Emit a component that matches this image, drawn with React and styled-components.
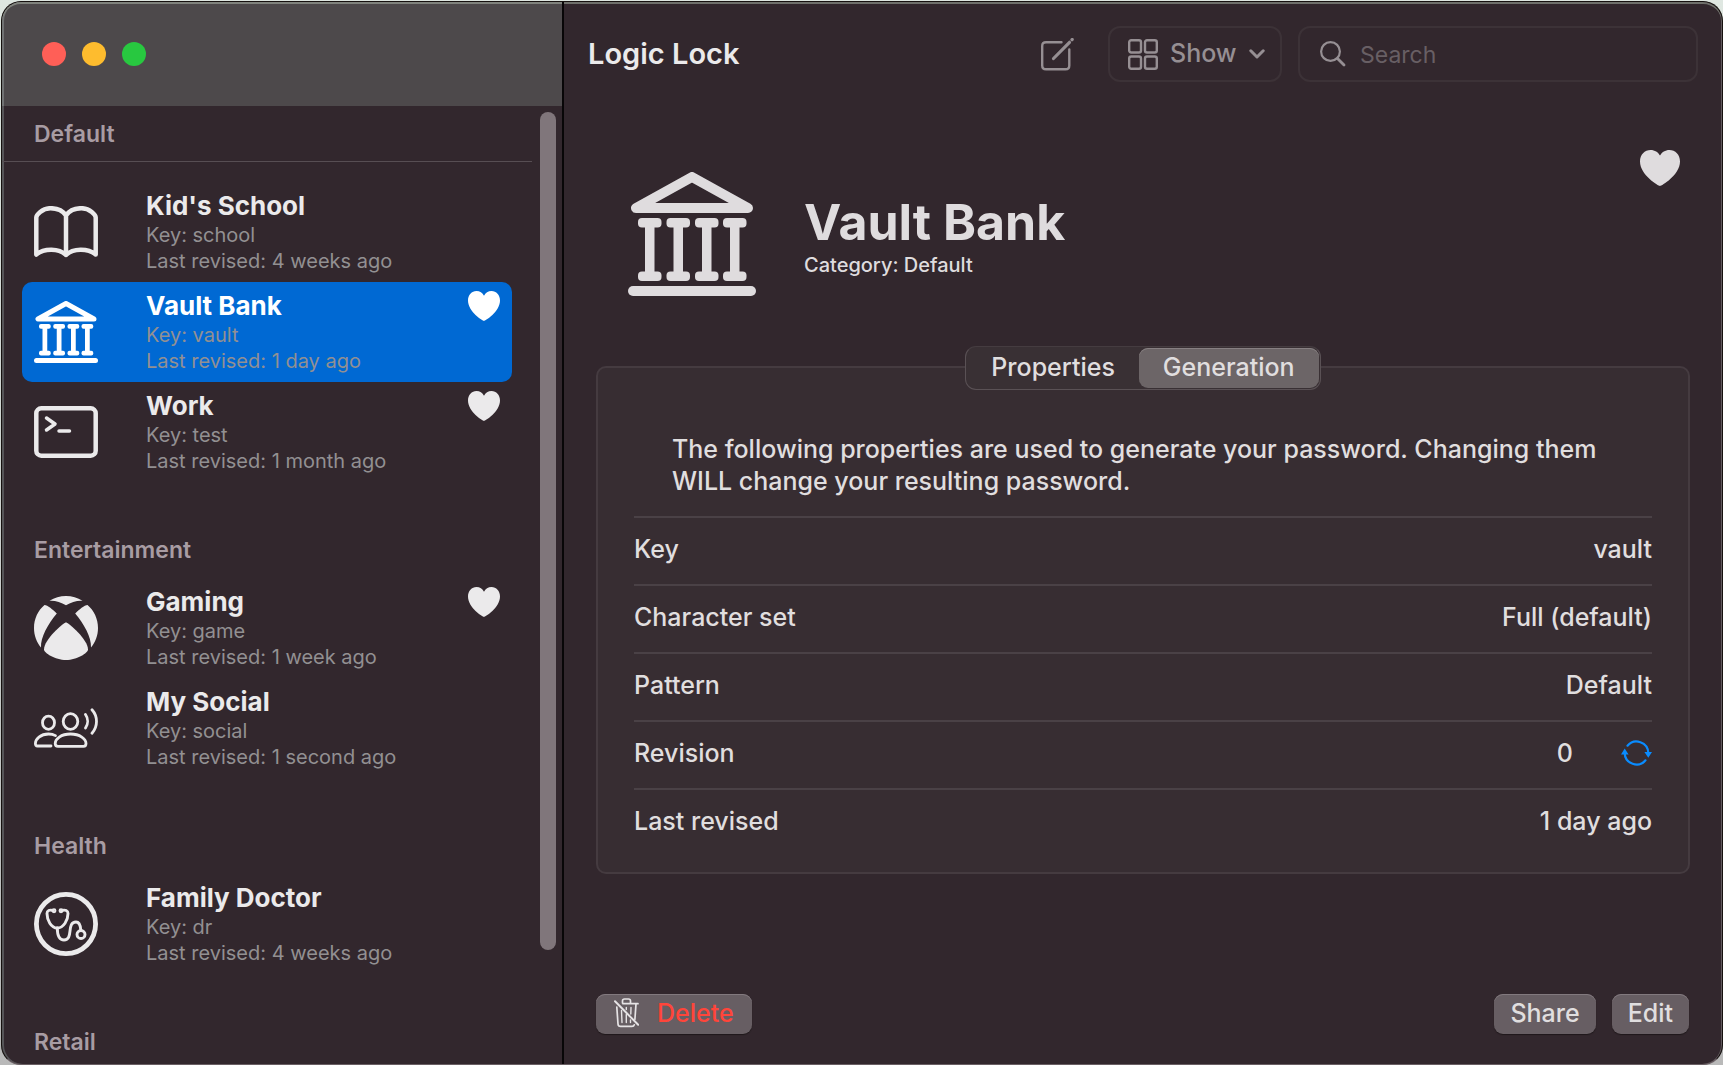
import { useState } from 'react';
import styled, { createGlobalStyle, css } from 'styled-components';

const colors = {
    window: '#32272d',
    panel: '#372d32',
    line: '#4a4146',
    text: '#e0dedf',
    bright: '#ebeaeb',
    muted: '#929092',
    heading: '#a89ca3',
    toolbar: '#968f93',
    outline: '#3c3237',
    button: '#675e63',
    accent: '#0069d3',
};

const GlobalStyle = createGlobalStyle`
    * {
        box-sizing: border-box;
    }

    body {
        margin: 0;
        background: linear-gradient(#dfe7e1, #b9b9b9);
        color: ${colors.text};
        font-family: Inter, "Liberation Sans", sans-serif;
    }

    button, input, select {
        font: inherit;
        color: inherit;
    }

    h1, h2, p, ul, dl, dd {
        margin: 0;
        padding: 0;
    }
`;

const Page = styled.div`
    height: 100vh;
    padding: 1px 0 0 1px;
`;

const Window = styled.div`
    display: flex;
    height: 100%;
    border: 1px solid #16110f;
    border-bottom-color: #6a5f64;
    border-radius: 20px;
    background: ${colors.window};
    box-shadow: inset 0 2px 0 #6f706b, inset 2px 0 0 #565558, inset -1px 0 0 #625a5e;
    overflow: hidden;
`;

const Sidebar = styled.aside`
    display: flex;
    flex-direction: column;
    flex: 0 0 562px;
    border-right: 2px solid #080607;
`;

const TitleBar = styled.div`
    display: flex;
    align-items: center;
    gap: 16px;
    flex: 0 0 104px;
    padding-left: 40px;
    background: #4d494b;
    box-shadow: inset 0 2px 0 #80837d, inset 2px 0 0 #707273;
    border-top-left-radius: 19px;
`;

const Light = styled.button`
    width: 24px;
    height: 24px;
    padding: 0;
    border: 0;
    border-radius: 50%;
    background: ${props => props.$color};
`;

const SidebarBody = styled.div`
    display: flex;
    flex: 1;
    min-height: 0;
`;

const Accounts = styled.nav`
    flex: 1;
    overflow-y: auto;
    scrollbar-width: none;
`;

const Section = styled.section`
    padding-bottom: 40px;
`;

const SectionTitle = styled.h2`
    height: 56px;
    padding-left: 32px;
    color: ${colors.heading};
    font-size: 23px;
    font-weight: 600;
    line-height: 56px;

    ${props => props.$pinned && css`
        margin-bottom: 20px;
        border-bottom: 1px solid #574e53;
    `}
`;

const AccountList = styled.ul`
    list-style: none;
    padding: 0 20px;
`;

const AccountRow = styled.button`
    display: flex;
    align-items: center;
    width: 100%;
    padding: 8px 12px;
    border: 0;
    border-radius: 10px;
    background: ${props => props.$selected ? colors.accent : 'transparent'};
    color: ${props => props.$selected ? '#fff' : colors.bright};
    text-align: left;
`;

const AccountIcon = styled.span`
    display: flex;
    flex: 0 0 64px;
    margin-right: 48px;
`;

const AccountText = styled.span`
    display: flex;
    flex-direction: column;
    flex: 1;
`;

const AccountName = styled.span`
    font-size: 26px;
    font-weight: 700;
    line-height: 32px;
`;

const AccountInfo = styled.span`
    color: ${colors.muted};
    font-size: 20px;
    line-height: 26px;
`;

const RowHeart = styled.span`
    display: flex;
    align-self: flex-start;
    padding-top: 1px;
`;

const Gutter = styled.div`
    flex: 0 0 30px;
    padding: 6px 6px 0 8px;
`;

const Thumb = styled.div`
    height: 88%;
    border-radius: 8px;
    background: #80767b;
`;

const Main = styled.main`
    display: flex;
    flex-direction: column;
    flex: 1;
    min-width: 0;
`;

const Toolbar = styled.header`
    display: flex;
    align-items: center;
    padding: 24px 24px 0;
    color: ${colors.toolbar};
`;

const AppTitle = styled.h1`
    flex: 1;
    color: ${colors.bright};
    font-size: 29px;
    font-weight: 600;
    line-height: 56px;
`;

const IconButton = styled.button`
    display: flex;
    padding: 0;
    border: 0;
    background: none;
`;

const ToolbarField = styled.label`
    display: flex;
    align-items: center;
    height: 56px;
    border: 2px solid ${colors.outline};
    border-radius: 12px;
`;

const ShowField = styled(ToolbarField)`
    gap: 12px;
    margin: 0 16px 0 34px;
    padding: 0 15px 0 18px;
`;

const ShowSelect = styled.select`
    appearance: none;
    padding: 0 0 2px;
    border: 0;
    background: none;
    font-size: 25px;
    font-weight: 500;
    line-height: 32px;
`;

const SearchField = styled(ToolbarField)`
    flex: 0 1 400px;
    gap: 14px;
    min-width: 0;
    padding: 0 20px;
`;

const SearchInput = styled.input`
    flex: 1;
    min-width: 0;
    padding: 2px 0 0;
    border: 0;
    outline: 0;
    background: none;
    font-size: 23px;

    &::placeholder {
        color: #685f64;
        opacity: 1;
    }
`;

const Hero = styled.div`
    display: flex;
    padding: 68px 42px 0 64px;
    color: #dfdcde;
`;

const HeroIcon = styled.div`
    display: flex;
    margin-top: 22px;
`;

const HeroText = styled.div`
    flex: 1;
    padding: 42px 48px 0;
`;

const HeroName = styled.h2`
    font-size: 50px;
    font-weight: 700;
    line-height: 60px;
`;

const HeroCategory = styled.p`
    font-size: 20px;
    font-weight: 500;
    line-height: 26px;
`;

const Panel = styled.section`
    display: flex;
    flex-direction: column;
    margin: 70px 32px 0;
    padding: 0 36px 16px;
    border: 2px solid #453b40;
    border-radius: 10px;
    background: ${colors.panel};
    font-size: 25px;
    font-weight: 500;
    line-height: 32px;
`;

const Tabs = styled.div`
    display: flex;
    align-self: center;
    height: 44px;
    margin-top: -22px;
    padding: 1px;
    border: 1px solid #5a5155;
    border-top-color: #453c40;
    border-radius: 11px;
    background: #393034;
`;

const Tab = styled.button`
    padding: 0 24px 2px;
    border: 0;
    border-radius: 9px;
    background: ${props => props.$active ? '#6c6567' : 'transparent'};
    box-shadow: ${props => props.$active ? 'inset 0 1px 0 #878082' : 'none'};
`;

const Description = styled.p`
    padding: 43px 36px 19px 38px;
`;

const Field = styled.div`
    display: flex;
    align-items: center;
    justify-content: space-between;
    height: 68px;
    padding-bottom: 5px;
    border-top: 2px solid ${colors.line};
`;

const FieldValue = styled.dd`
    display: flex;
    align-items: center;
    gap: 48px;
`;

const Footer = styled.footer`
    display: flex;
    gap: 16px;
    margin-top: auto;
    padding: 0 33px 30px 32px;
`;

const Button = styled.button`
    display: flex;
    align-items: center;
    height: 40px;
    padding: 0 16px 2px;
    border: 0;
    border-radius: 9px;
    background: ${colors.button};
    box-shadow: inset 0 1px 0 #82797e, 0 1px 1px #1f181b;
    font-size: 25px;
    font-weight: 500;
    line-height: 32px;
`;

const DeleteButton = styled(Button)`
    gap: 18px;
    margin-right: auto;
    padding: 0 18px 2px;
    color: #ff453a;
`;

function Heart({ width, height }) {
    return (
        <svg width={width} height={height} viewBox="0 0 40 36" preserveAspectRatio="none" fill="currentColor" aria-hidden="true">
            <path d="M20 36C18.600 36 0 25 0 11.500C0 4.600 4.700 0 10.600 0C14.800 0 18.200 2.200 20 5.600C21.800 2.200 25.200 0 29.400 0C35.300 0 40 4.600 40 11.500C40 25 21.400 36 20 36Z" />
        </svg>
    );
}

function Bank({ width }) {
    return (
        <svg width={width} viewBox="0 0 128 124" fill="currentColor" aria-hidden="true">
            <path d="M64 5L8 36H120Z" fill="none" stroke="currentColor" strokeWidth="10" strokeLinejoin="round" />
            {[10, 38.5, 67, 95].map(x => (
                <g key={x}>
                    <rect x={x} y="46" width="23.500" height="9.500" rx="4" />
                    <rect x={x + 7} y="50" width="9.500" height="54" />
                    <rect x={x} y="99.500" width="23.500" height="9.500" rx="4" />
                </g>
            ))}
            <rect y="114" width="128" height="10" rx="5" />
        </svg>
    );
}

function Book() {
    return (
        <svg width="64" height="52" viewBox="0 0 64 52" fill="none" stroke="currentColor" strokeWidth="4.500" strokeLinecap="round" strokeLinejoin="round" aria-hidden="true">
            <path d="M32 49C25 42 10 42 2.300 48.500V11.500C2.300 9 8 2.200 16.500 2.200C23 2.200 29 5 32 9.500C35 5 41 2.200 47.500 2.200C56 2.200 61.700 9 61.700 11.500V48.500C54 42 39 42 32 49ZM32 9.500V49" />
        </svg>
    );
}

function Terminal() {
    return (
        <svg width="64" height="52" viewBox="0 0 64 52" fill="none" stroke="currentColor" strokeLinecap="round" strokeLinejoin="round" aria-hidden="true">
            <rect x="2.300" y="2.300" width="59.400" height="47.400" rx="5" strokeWidth="4.500" />
            <path d="M12.500 12L21 18L12.500 24M25 25H35.500" strokeWidth="3.500" />
        </svg>
    );
}

function Xbox() {
    return (
        <svg width="64" height="64" viewBox="0 0 64 64" fill="currentColor" aria-hidden="true">
            <path d="M15.500 4.800C20.500 1.700 26 0 32 0S43.500 1.700 48.500 4.800C43.500 4.200 37 6.500 32 9.300C27 6.500 20.500 4.200 15.500 4.800Z" />
            <path d="M10.500 9C13.500 9.200 19 13.500 22.800 17.600C14 28 6.500 41.500 7 51.500C2.600 46 0 39.500 0 32C0 22.800 4 14.500 10.500 9Z" />
            <path d="M53.500 9C50.500 9.200 45 13.500 41.200 17.600C50 28 57.500 41.500 57 51.500C61.400 46 64 39.500 64 32C64 22.800 60 14.500 53.500 9Z" />
            <path d="M32 26.300C35 27.500 54 43.500 54 53.500C54 57 43 64 32 64S10 57 10 53.500C10 43.500 29 27.500 32 26.300Z" />
        </svg>
    );
}

function People() {
    return (
        <svg width="64" height="40" viewBox="0 0 64 40" fill="none" stroke="currentColor" strokeWidth="2.800" strokeLinecap="round" strokeLinejoin="round" aria-hidden="true">
            <ellipse cx="14.500" cy="14.700" rx="6" ry="6.600" />
            <ellipse cx="36.500" cy="13.500" rx="7.300" ry="7.800" />
            <path d="M17 38H3.500C2 38 1.400 37 1.400 35.500C1.400 31 6.500 26 14.500 26C17.500 26 19.700 26.600 21.500 27.600" />
            <path d="M24 38.300C22 38.300 21.200 37 21.200 35.500C21.200 31 27 26 36.500 26S52 31 52 35.500C52 37 51 38.300 49.500 38.300Z" />
            <path d="M51.500 6.500C54.300 10.500 54.300 16 51.500 20M58 1.800C64 8.500 64 18.500 58 25.200" />
        </svg>
    );
}

function Stethoscope() {
    return (
        <svg width="64" height="64" viewBox="0 0 64 64" fill="none" stroke="currentColor" strokeWidth="2.900" strokeLinecap="round" strokeLinejoin="round" aria-hidden="true">
            <circle cx="32" cy="32" r="29.600" strokeWidth="4.800" />
            <path d="M19 18.500C15.500 17.500 13 18.500 13 21.500C13 28 17 36 23.300 36S34 28 34 21.500C34 18.500 31.500 17.500 27.500 18.500" />
            <path d="M23.300 36C23.300 43 25 48 30 48C40 48 32 30 42 30C46 30 46.500 34 46.800 38" />
            <circle cx="47" cy="42.500" r="4" />
            <circle cx="20" cy="18.800" r="1" />
            <circle cx="27" cy="18.800" r="1" />
        </svg>
    );
}

function Compose() {
    return (
        <svg width="33" height="33" viewBox="0 0 33 33" fill="none" stroke="currentColor" strokeWidth="2.400" strokeLinecap="round" strokeLinejoin="round" aria-hidden="true">
            <path d="M20.500 4.200H5C2.500 4.200 1.200 5.500 1.200 8V27.500C1.200 30 2.500 31.300 5 31.300H24.500C27 31.300 28.300 30 28.300 27.500V11.500" />
            <path d="M12.500 20.500L28.500 4.300" strokeWidth="3.200" />
            <path d="M31 1.700L31.200 1.500" strokeWidth="3.200" />
        </svg>
    );
}

function Grid() {
    return (
        <svg width="30" height="31" viewBox="0 0 30 31" fill="none" stroke="currentColor" strokeWidth="2.400" aria-hidden="true">
            <rect x="1.200" y="1.200" width="11.800" height="12.300" rx="2" />
            <rect x="17" y="1.200" width="11.800" height="12.300" rx="2" />
            <rect x="1.200" y="17.500" width="11.800" height="12.300" rx="2" />
            <rect x="17" y="17.500" width="11.800" height="12.300" rx="2" />
        </svg>
    );
}

function Chevron() {
    return (
        <svg width="16" height="10" viewBox="0 0 16 10" fill="none" stroke="currentColor" strokeWidth="3" strokeLinecap="round" strokeLinejoin="round" aria-hidden="true">
            <path d="M1.800 1.800L8 8L14.200 1.800" />
        </svg>
    );
}

function Magnifier() {
    return (
        <svg width="26" height="26" viewBox="0 0 26 26" fill="none" stroke="currentColor" strokeLinecap="round" aria-hidden="true">
            <circle cx="10.500" cy="10.500" r="9.400" strokeWidth="2.200" />
            <path d="M17.500 17.500L24 24" strokeWidth="2.800" />
        </svg>
    );
}

function Cycle() {
    return (
        <svg width="31" height="26" viewBox="0 0 31 26" fill="none" stroke="#0a8cff" strokeWidth="2.200" strokeLinecap="round" aria-hidden="true">
            <path d="M6.500 5.700A11.800 11.800 0 0 1 27.300 13M24.500 20.300A11.800 11.800 0 0 1 3.700 13" />
            <path d="M0 14.500L3.700 8.500L7.600 14.500ZM23.400 12L27.300 17.800L31 12Z" fill="#0a8cff" stroke="none" />
        </svg>
    );
}

function TrashSlash() {
    return (
        <svg width="25" height="30" viewBox="0 0 25 30" fill="none" stroke="#e6e3e5" strokeWidth="1.700" strokeLinecap="round" strokeLinejoin="round" aria-hidden="true">
            <path d="M8.500 5V3C8.500 1.700 9.200 1 10.500 1H14.500C15.800 1 16.500 1.700 16.500 3V5.500M9 5.700H24M2.800 9L4 26C4.100 27.600 5 28.400 6.500 28.400H18C19.200 28.400 20 27.800 20.300 26.800M22 6L20.900 21.500" />
            <path d="M7.500 12.500L8 24.500M12.300 16.500V24.500M12.300 9.500V11.500M17 9.500L16.800 16M16.500 22V24.500" strokeWidth="1.400" />
            <path d="M1 3.200L24.200 26.800" strokeWidth="2" />
        </svg>
    );
}

const sections = [
    {
        title: 'Default',
        accounts: [
            { name: "Kid's School", key: 'school', revised: '4 weeks ago', icon: <Book /> },
            { name: 'Vault Bank', key: 'vault', revised: '1 day ago', icon: <Bank width="64" />, favorite: true },
            { name: 'Work', key: 'test', revised: '1 month ago', icon: <Terminal />, favorite: true },
        ],
    },
    {
        title: 'Entertainment',
        accounts: [
            { name: 'Gaming', key: 'game', revised: '1 week ago', icon: <Xbox />, favorite: true },
            { name: 'My Social', key: 'social', revised: '1 second ago', icon: <People /> },
        ],
    },
    {
        title: 'Health',
        accounts: [
            { name: 'Family Doctor', key: 'dr', revised: '4 weeks ago', icon: <Stethoscope /> },
        ],
    },
    { title: 'Retail', accounts: [] },
];

const fields = [
    { label: 'Key', value: 'vault' },
    { label: 'Character set', value: 'Full (default)' },
    { label: 'Pattern', value: 'Default' },
    { label: 'Revision', value: '0', renewable: true },
    { label: 'Last revised', value: '1 day ago' },
];

function Account({ account, selected, onSelect }) {
    return (
        <li>
            <AccountRow $selected={selected} aria-current={selected} onClick={onSelect}>
                <AccountIcon>{account.icon}</AccountIcon>
                <AccountText>
                    <AccountName>{account.name}</AccountName>
                    <AccountInfo>Key: {account.key}</AccountInfo>
                    <AccountInfo>Last revised: {account.revised}</AccountInfo>
                </AccountText>
                {account.favorite && <RowHeart><Heart width="32" height="30" /></RowHeart>}
            </AccountRow>
        </li>
    );
}

function App() {

    const [selected, setSelected] = useState('vault');
    const [tab, setTab] = useState('Generation');

    return (
        <Page>
            <GlobalStyle />
            <Window>
                <Sidebar>
                    <TitleBar>
                        <Light $color="#ff5f57" aria-label="Close" />
                        <Light $color="#febc2e" aria-label="Minimize" />
                        <Light $color="#28c840" aria-label="Zoom" />
                    </TitleBar>
                    <SidebarBody>
                        <Accounts>
                            {sections.map((section, index) => (
                                <Section key={section.title}>
                                    <SectionTitle $pinned={index === 0}>{section.title}</SectionTitle>
                                    <AccountList>
                                        {section.accounts.map(account => (
                                            <Account
                                                key={account.key}
                                                account={account}
                                                selected={account.key === selected}
                                                onSelect={() => setSelected(account.key)}
                                            />
                                        ))}
                                    </AccountList>
                                </Section>
                            ))}
                        </Accounts>
                        <Gutter><Thumb /></Gutter>
                    </SidebarBody>
                </Sidebar>

                <Main>
                    <Toolbar>
                        <AppTitle>Logic Lock</AppTitle>
                        <IconButton aria-label="New account"><Compose /></IconButton>
                        <ShowField>
                            <Grid />
                            <ShowSelect aria-label="Show">
                                <option>Show</option>
                            </ShowSelect>
                            <Chevron />
                        </ShowField>
                        <SearchField>
                            <Magnifier />
                            <SearchInput type="search" placeholder="Search" aria-label="Search" />
                        </SearchField>
                    </Toolbar>

                    <Hero>
                        <HeroIcon><Bank width="128" /></HeroIcon>
                        <HeroText>
                            <HeroName>Vault Bank</HeroName>
                            <HeroCategory>Category: Default</HeroCategory>
                        </HeroText>
                        <Heart width="40" height="36" />
                    </Hero>

                    <Panel>
                        <Tabs role="tablist">
                            {['Properties', 'Generation'].map(name => (
                                <Tab key={name} role="tab" aria-selected={tab === name} $active={tab === name} onClick={() => setTab(name)}>
                                    {name}
                                </Tab>
                            ))}
                        </Tabs>
                        <Description>
                            The following properties are used to generate your password. Changing them WILL change your resulting password.
                        </Description>
                        <dl>
                            {fields.map(field => (
                                <Field key={field.label}>
                                    <dt>{field.label}</dt>
                                    <FieldValue>
                                        {field.value}
                                        {field.renewable && <IconButton aria-label="New revision"><Cycle /></IconButton>}
                                    </FieldValue>
                                </Field>
                            ))}
                        </dl>
                    </Panel>

                    <Footer>
                        <DeleteButton><TrashSlash />Delete</DeleteButton>
                        <Button>Share</Button>
                        <Button>Edit</Button>
                    </Footer>
                </Main>
            </Window>
        </Page>
    );
}

export default App;
